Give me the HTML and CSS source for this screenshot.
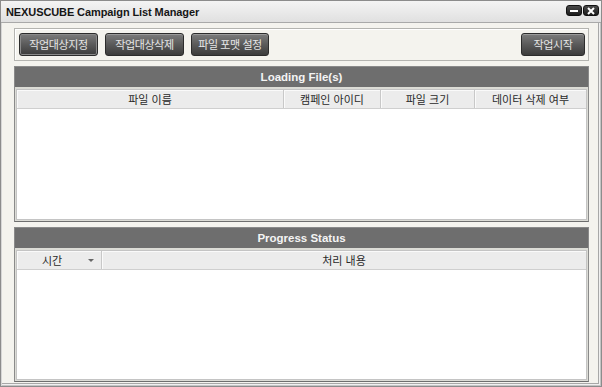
FILE: index.html
```html
<!DOCTYPE html>
<html lang="ko">
<head>
	<meta charset="UTF-8">
	<meta name="viewport" content="width=device-width, initial-scale=1.0">
	<title>NEXUSCUBE Campaign List Manager</title>
	<link rel="stylesheet" href="styles.css">
</head>
<body>
	<div class="window">
		<div class="titlebar">
			<span class="title">NEXUSCUBE Campaign List Manager</span>
			<div class="win-buttons">
				<span class="win-btn">
					<svg width="10" height="6" viewBox="0 0 10 6"><rect x="1" y="2" width="8" height="2" fill="#fff"/></svg>
				</span>
				<span class="win-btn">
					<svg width="10" height="8" viewBox="0 0 10 8"><path d="M2 1 L8 7 M8 1 L2 7" stroke="#fff" stroke-width="2"/></svg>
				</span>
			</div>
		</div>

		<div class="content">
			<div class="toolbar">
				<button class="btn focused">작업대상지정</button>
				<button class="btn">작업대상삭제</button>
				<button class="btn">파일 포맷 설정</button>
				<button class="btn start">작업시작</button>
			</div>

			<div class="panel">
				<div class="panel-head">Loading File(s)</div>
				<div class="list">
					<div class="cols cols-files">
						<div class="col">파일 이름</div>
						<div class="col">캠페인 아이디</div>
						<div class="col">파일 크기</div>
						<div class="col">데이터 삭제 여부</div>
					</div>
				</div>
			</div>

			<div class="panel">
				<div class="panel-head">Progress Status</div>
				<div class="list">
					<div class="cols cols-progress">
						<div class="col col-sort">시간<span class="sort-arrow"></span></div>
						<div class="col">처리 내용</div>
					</div>
				</div>
			</div>
		</div>
	</div>
</body>
</html>
```

FILE: styles.css
```css
body {
	margin: 0;
	padding: 0;
	background: #fff;
}

.window {
	width: 602px;
	height: 387px;
	box-sizing: border-box;
	display: flex;
	flex-direction: column;
	background: #f4f3ee;
	border: 1px solid #8c8c8c;
	box-shadow: inset 1px 0 0 #d6d6d6, inset -1px -1px 0 #c4c4c4, inset -2px -2px 0 #f0f0f0, inset -3px -3px 0 #a8a8a8;
}

.titlebar {
	height: 21px;
	flex: none;
	display: flex;
	align-items: center;
	justify-content: space-between;
	padding: 0 2px 0 5px;
	background: linear-gradient(#f4f4f4, #e0e0e0);
	border-bottom: 1px solid #a9a9a9;
}

.title {
	font-family: "Liberation Sans", Arial, sans-serif;
	font-weight: bold;
	font-size: 11px;
	color: #161616;
	letter-spacing: -0.1px;
}

.win-buttons {
	display: flex;
	gap: 1px;
	margin-top: -2px;
}

.win-btn {
	width: 16px;
	height: 11px;
	border-radius: 3px;
	background: linear-gradient(#4a4a4a, #1c1c1c);
	border: 1px solid #111;
	box-sizing: border-box;
	display: flex;
	align-items: center;
	justify-content: center;
}

.content {
	flex: 1;
	display: flex;
	flex-direction: column;
	gap: 5px;
	padding: 5px 12px 4px 13px;
}

.toolbar {
	flex: none;
	height: 33px;
	box-sizing: border-box;
	display: flex;
	align-items: center;
	gap: 7px;
	padding: 0 3px 0 4px;
	border: 1px solid #b4b4b0;
	box-shadow: inset 1px 1px 0 #fff;
}

.btn {
	height: 23px;
	padding: 0;
	white-space: nowrap;
	font-family: "Noto Sans CJK KR", sans-serif;
	font-size: 11px;
	letter-spacing: -0.4px;
	color: #e6e6e6;
	background: linear-gradient(#7c7c7c, #5a5a5a 50%, #3c3c3c);
	border: 1px solid #2c2c2c;
	border-radius: 3px;
	box-shadow: inset 0 1px 0 #9a9a9a;
	line-height: 21px;
}

.toolbar .btn:nth-child(1),
.toolbar .btn:nth-child(2) {
	width: 79px;
}

.toolbar .btn:nth-child(3) {
	width: 78px;
}

.btn.focused {
	box-shadow: inset 0 0 0 1px #8a8a8a;
}

.btn.start {
	margin-left: auto;
	width: 64px;
}

.panel {
	flex: 1;
	display: flex;
	flex-direction: column;
	border: 1px solid #8a8a8a;
	border-bottom-color: #6e6e6e;
	background: #dcdcd6;
}

.panel-head {
	height: 20px;
	flex: none;
	background: #6e6e6e;
	color: #f4f4f4;
	font-family: "Liberation Sans", Arial, sans-serif;
	font-weight: bold;
	font-size: 11.5px;
	display: flex;
	align-items: center;
	justify-content: center;
}

.list {
	flex: 1;
	margin: 2px 1px 1px 1px;
	border: 1px solid #c4c4c4;
	background: #fff;
}

.cols {
	display: grid;
	height: 18px;
	background: #ececec;
	border-bottom: 1px solid #cfcfcf;
}

.cols-files {
	grid-template-columns: 267px 97px 94px 1fr;
}

.cols-progress {
	grid-template-columns: 85px 1fr;
}

.col {
	font-family: "Noto Sans CJK KR", sans-serif;
	font-size: 11px;
	color: #2a2a2a;
	display: flex;
	align-items: center;
	justify-content: center;
	border-right: 1px solid #c8c8c8;
	box-shadow: inset 1px 1px 0 #fafafa;
}

.col:last-child {
	border-right: none;
}

.col-sort {
	position: relative;
	padding-right: 14px;
}

.sort-arrow {
	position: absolute;
	right: 7px;
	top: 8px;
	border-left: 3px solid transparent;
	border-right: 3px solid transparent;
	border-top: 3px solid #666;
}
```
